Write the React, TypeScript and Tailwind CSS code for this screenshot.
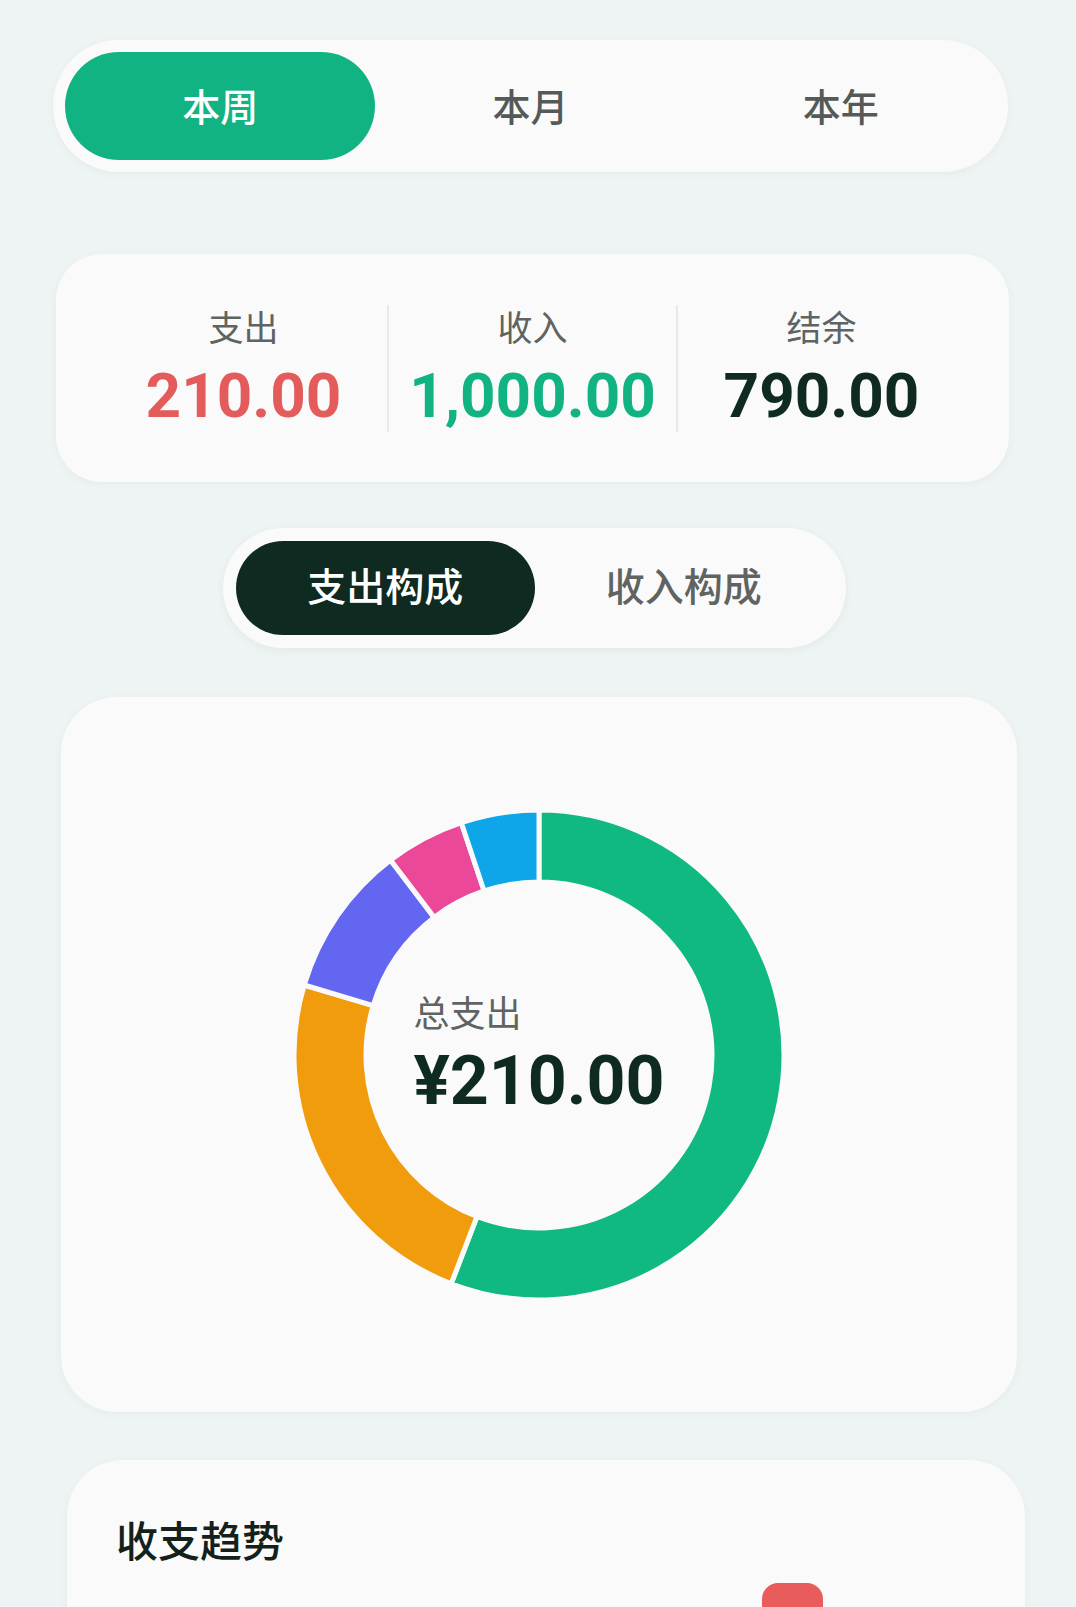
import React from "react";

const CX = 250;
const CY = 250;
const R = 245;
const r = 173;

function pt(deg: number, rad: number) {
  const a = (deg * Math.PI) / 180;
  return [CX + rad * Math.sin(a), CY - rad * Math.cos(a)];
}

function sector(s: number, e: number) {
  const [x1, y1] = pt(s, R);
  const [x2, y2] = pt(e, R);
  const [x3, y3] = pt(e, r);
  const [x4, y4] = pt(s, r);
  const large = e - s > 180 ? 1 : 0;
  return `M${x1} ${y1} A${R} ${R} 0 ${large} 1 ${x2} ${y2} L${x3} ${y3} A${r} ${r} 0 ${large} 0 ${x4} ${y4} Z`;
}

const segments = [
  { s: 0, e: 201, c: "#10b981" },
  { s: 201, e: 286.6, c: "#f09c0c" },
  { s: 286.6, e: 322.7, c: "#6366f1" },
  { s: 322.7, e: 341.5, c: "#ec4899" },
  { s: 341.5, e: 360, c: "#0ea5e9" },
];

function Donut() {
  return (
    <svg width={500} height={500} viewBox="0 0 500 500">
      {segments.map((g, i) => (
        <path key={i} d={sector(g.s, g.e)} fill={g.c} stroke="#fafafa" strokeWidth={5} strokeLinejoin="miter" />
      ))}
    </svg>
  );
}

export default function App() {
  return (
    <div className="w-[1076px] h-[1607px] overflow-hidden bg-[#eef4f3] font-[Roboto,'Noto_Sans_CJK_SC',sans-serif] flex flex-col">
      {/* Period tabs */}
      <div className="shrink-0 ml-[53px] mt-[40px] w-[955px] h-[132px] rounded-full bg-[#fafafa] p-[12px] grid grid-cols-3 shadow-[0_2px_10px_rgba(0,0,0,0.04)]">
        <div className="rounded-full bg-[#12b382] flex items-center justify-center pt-[4px] text-white text-[38px] font-medium">
          本周
        </div>
        <div className="flex items-center justify-center pt-[4px] text-[#555a58] text-[38px] font-medium">本月</div>
        <div className="flex items-center justify-center pt-[4px] text-[#555a58] text-[38px] font-medium">本年</div>
      </div>

      {/* Summary */}
      <div className="shrink-0 ml-[56px] mt-[82px] w-[953px] h-[228px] rounded-[46px] bg-[#fafafa] px-[44px] flex items-center shadow-[0_2px_10px_rgba(0,0,0,0.04)]">
        <div className="flex-1 flex flex-col items-center">
          <div className="text-[35px] leading-[40px] text-[#5f6361]">支出</div>
          <div className="mt-[15px] text-[62px] leading-[62px] font-bold text-[#e35b5b]">210.00</div>
        </div>
        <div className="w-[2px] h-[127px] bg-[#e6eae8]" />
        <div className="flex-1 flex flex-col items-center">
          <div className="text-[35px] leading-[40px] text-[#5f6361]">收入</div>
          <div className="mt-[15px] text-[62px] leading-[62px] font-bold text-[#12b382]">1,000.00</div>
        </div>
        <div className="w-[2px] h-[127px] bg-[#e6eae8]" />
        <div className="flex-1 flex flex-col items-center">
          <div className="text-[35px] leading-[40px] text-[#5f6361]">结余</div>
          <div className="mt-[15px] text-[62px] leading-[62px] font-bold text-[#0f2a20]">790.00</div>
        </div>
      </div>

      {/* Composition toggle */}
      <div className="shrink-0 ml-[223px] mt-[46px] w-[623px] h-[120px] rounded-full bg-[#fafafa] p-[13px] grid grid-cols-2 shadow-[0_2px_10px_rgba(0,0,0,0.05)]">
        <div className="rounded-full bg-[#0f2a20] flex items-center justify-center text-white text-[39px] font-medium">
          支出构成
        </div>
        <div className="flex items-center justify-center text-[#5f6361] text-[39px] font-medium">收入构成</div>
      </div>

      {/* Chart card */}
      <div className="ml-[61px] mt-[49px] w-[956px] h-[715px] shrink-0 rounded-[56px] bg-[#fafafa] flex items-center justify-center shadow-[0_2px_10px_rgba(0,0,0,0.04)]">
        <div className="relative w-[500px] h-[500px]">
          <Donut />
          <div className="absolute inset-0 flex items-center justify-center">
            <div className="flex flex-col items-start">
              <div className="text-[36px] leading-[40px] text-[#5f6361]">总支出</div>
              <div className="mt-[12px] text-[68px] leading-[68px] font-bold text-[#0f2a20]">¥210.00</div>
            </div>
          </div>
        </div>
      </div>

      {/* Trend card */}
      <div className="ml-[67px] mt-[48px] w-[958px] h-[400px] shrink-0 rounded-t-[56px] bg-[#fafafa] pt-[60px] pl-[49px] shadow-[0_2px_10px_rgba(0,0,0,0.04)]">
        <div className="text-[42px] leading-[46px] font-medium text-[#14211b]">收支趋势</div>
        <div className="mt-[17px] ml-[646px] w-[61px] h-[60px] rounded-t-[16px] bg-[#e85c5c]" />
      </div>
    </div>
  );
}
